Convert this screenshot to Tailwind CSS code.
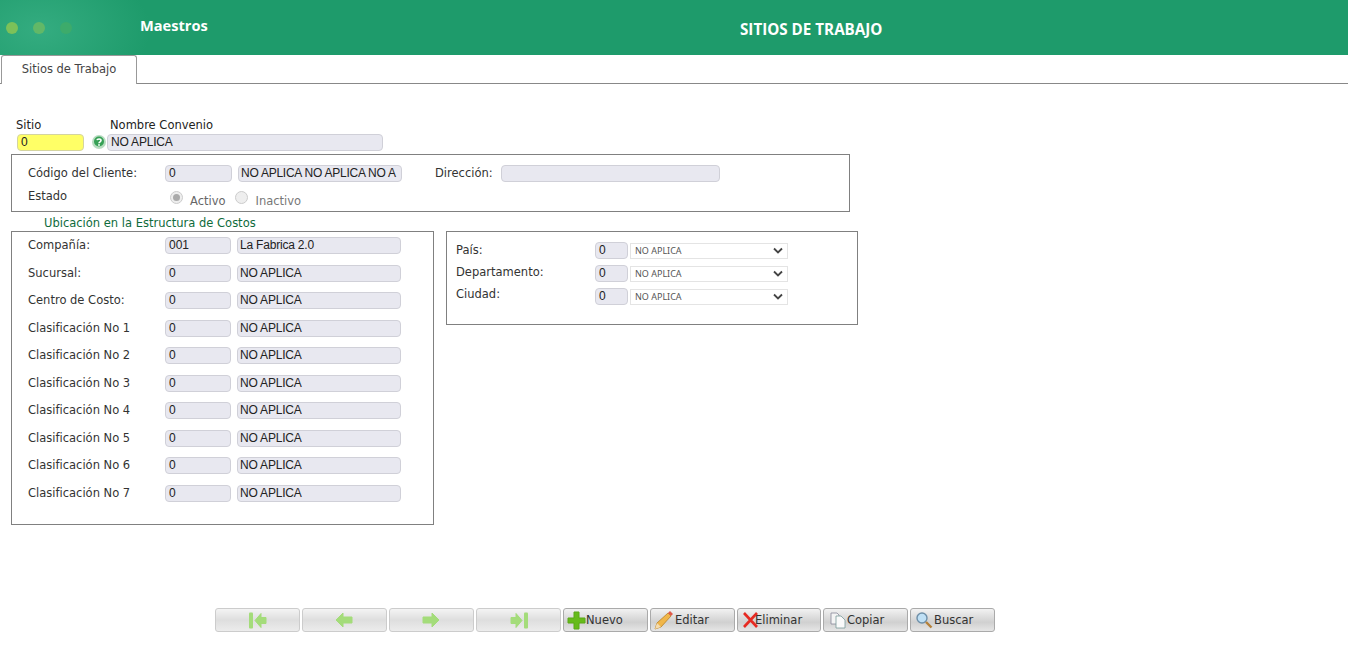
<!DOCTYPE html>
<html lang="es">
<head>
  <meta charset="UTF-8" />
  <title>Sitios de Trabajo</title>
  <script src="https://cdn.jsdelivr.net/npm/@tailwindcss/browser@4"></script>
</head>
<body class="bg-white h-[657px] overflow-hidden font-['DejaVu_Sans',sans-serif] text-[11.500px] text-[#333]">

  <!-- encabezado -->
  <header class="h-[55px] flex items-center bg-[#1e9b6b] bg-[radial-gradient(ellipse_110px_70px_at_40px_30px,#34ac80,#1e9b6b)] text-white font-['Open_Sans',sans-serif] font-bold">
    <div class="w-[140px] flex items-center gap-[15px] pl-[6px]">
      <span class="w-[12px] h-[12px] rounded-full bg-[#7cc159]"></span>
      <span class="w-[12px] h-[12px] rounded-full bg-[#62b867]"></span>
      <span class="w-[12px] h-[12px] rounded-full bg-[#3dab6b]"></span>
    </div>
    <div class="w-[600px] text-[14.600px] -mt-[3px]">Maestros</div>
    <div class="text-[15.200px] mt-[4px]">SITIOS DE TRABAJO</div>
  </header>

  <!-- pestaña -->
  <nav class="h-[29px] border-b border-[#888] flex items-end pl-[1px]">
    <div class="w-[136px] h-[29px] -mb-px bg-white border border-b-0 border-[#999] rounded-t-[3px] flex items-center justify-center text-[#444]">Sitios de Trabajo</div>
  </nav>

  <main class="pl-[11px]">
    <!-- sitio -->
    <div class="flex h-[49px] pl-[5px] pt-[34px]">
      <div class="w-[94px] h-[15px] leading-[15px] text-[#222]">Sitio</div>
      <div class="h-[15px] leading-[15px] text-[#222]">Nombre Convenio</div>
    </div>
    <div class="flex items-center h-[18px] pl-[6px] mb-[3px]">
      <div class="w-[67px] h-[17px] rounded-[4px] border border-[#d4d4a0] bg-[#ffff66] pl-[3px] text-[12px] leading-[15px] font-['Liberation_Sans',sans-serif] text-[#222]">0</div>
      <svg class="ml-[8px] w-[14px] h-[14px]" viewBox="0 0 14 14">
        <circle cx="7" cy="7" r="7" fill="#b7dcc0"/>
        <circle cx="7" cy="6.500" r="5" fill="#36a055"/>
        <path d="M5 5.200c.3-1.500 4-1.700 4 .3 0 1.300-2 1.300-2 2.700" fill="none" stroke="#fff" stroke-width="1.600"/>
        <circle cx="7" cy="10" r=".9" fill="#fff"/>
      </svg>
      <div class="ml-[1px] w-[276px] h-[17px] rounded-[4px] border border-[#d0d0d8] bg-[#e8e8f0] pl-[3px] text-[12px] tracking-[-0.2px] leading-[15px] font-['Liberation_Sans',sans-serif] text-[#222]">NO APLICA</div>
    </div>

    <!-- cliente -->
    <section class="w-[839px] h-[58px] border border-[#808080] pl-[16px] pt-[10px]">
      <div class="flex items-center h-[17px]">
        <div class="w-[137px] mt-[1px]">Código del Cliente:</div>
        <div class="w-[67px] h-[17px] rounded-[4px] border border-[#d0d0d8] bg-[#e8e8f0] pl-[3px] text-[12px] leading-[15px] font-['Liberation_Sans',sans-serif] text-[#222]">0</div>
        <div class="ml-[6px] w-[164px] h-[17px] rounded-[4px] border border-[#d0d0d8] bg-[#e8e8f0] pl-[2px] text-[12px] tracking-[-0.25px] leading-[15px] font-['Liberation_Sans',sans-serif] text-[#222] whitespace-nowrap">NO APLICA NO APLICA NO A</div>
        <div class="ml-[33px] w-[66px] mt-[1px]">Dirección:</div>
        <div class="w-[219px] h-[17px] rounded-[4px] border border-[#d0d0d8] bg-[#e8e8f0]"></div>
      </div>
      <div class="flex items-center h-[24px] mt-[3px]">
        <div class="w-[142px] -mt-[1px]">Estado</div>
        <span class="w-[13px] h-[13px] rounded-full border border-[#ccc] bg-[#eee] flex items-center justify-center"><span class="w-[7px] h-[7px] rounded-full bg-[#aaa]"></span></span>
        <span class="ml-[7px] mt-[10px] text-[#666]">Activo</span>
        <span class="ml-[9px] w-[13px] h-[13px] rounded-full border border-[#ccc] bg-[#eee]"></span>
        <span class="ml-[8px] mt-[10px] text-[#777]">Inactivo</span>
      </div>
    </section>

    <h3 class="pl-[33px] mt-[4px] h-[15px] leading-[15px] text-[#0f6b3c]">Ubicación en la Estructura de Costos</h3>

    <div class="flex items-start gap-[12px]">
      <!-- estructura de costos -->
      <section class="w-[423px] h-[294px] border border-[#808080] pl-[16px]">
        <div class="flex items-center h-[27.500px]"><div class="w-[137px]">Compañía:</div><div class="w-[66px] h-[17px] rounded-[4px] border border-[#d0d0d8] bg-[#e8e8f0] pl-[3px] text-[12px] leading-[15px] font-['Liberation_Sans',sans-serif] text-[#222]">001</div><div class="ml-[6px] w-[164px] h-[17px] rounded-[4px] border border-[#d0d0d8] bg-[#e8e8f0] pl-[2px] text-[12px] tracking-[-0.2px] leading-[15px] font-['Liberation_Sans',sans-serif] text-[#222]">La Fabrica 2.0</div></div>
        <div class="flex items-center h-[27.500px]"><div class="w-[137px]">Sucursal:</div><div class="w-[66px] h-[17px] rounded-[4px] border border-[#d0d0d8] bg-[#e8e8f0] pl-[3px] text-[12px] leading-[15px] font-['Liberation_Sans',sans-serif] text-[#222]">0</div><div class="ml-[6px] w-[164px] h-[17px] rounded-[4px] border border-[#d0d0d8] bg-[#e8e8f0] pl-[2px] text-[12px] tracking-[-0.2px] leading-[15px] font-['Liberation_Sans',sans-serif] text-[#222]">NO APLICA</div></div>
        <div class="flex items-center h-[27.500px]"><div class="w-[137px]">Centro de Costo:</div><div class="w-[66px] h-[17px] rounded-[4px] border border-[#d0d0d8] bg-[#e8e8f0] pl-[3px] text-[12px] leading-[15px] font-['Liberation_Sans',sans-serif] text-[#222]">0</div><div class="ml-[6px] w-[164px] h-[17px] rounded-[4px] border border-[#d0d0d8] bg-[#e8e8f0] pl-[2px] text-[12px] tracking-[-0.2px] leading-[15px] font-['Liberation_Sans',sans-serif] text-[#222]">NO APLICA</div></div>
        <div class="flex items-center h-[27.500px]"><div class="w-[137px]">Clasificación No 1</div><div class="w-[66px] h-[17px] rounded-[4px] border border-[#d0d0d8] bg-[#e8e8f0] pl-[3px] text-[12px] leading-[15px] font-['Liberation_Sans',sans-serif] text-[#222]">0</div><div class="ml-[6px] w-[164px] h-[17px] rounded-[4px] border border-[#d0d0d8] bg-[#e8e8f0] pl-[2px] text-[12px] tracking-[-0.2px] leading-[15px] font-['Liberation_Sans',sans-serif] text-[#222]">NO APLICA</div></div>
        <div class="flex items-center h-[27.500px]"><div class="w-[137px]">Clasificación No 2</div><div class="w-[66px] h-[17px] rounded-[4px] border border-[#d0d0d8] bg-[#e8e8f0] pl-[3px] text-[12px] leading-[15px] font-['Liberation_Sans',sans-serif] text-[#222]">0</div><div class="ml-[6px] w-[164px] h-[17px] rounded-[4px] border border-[#d0d0d8] bg-[#e8e8f0] pl-[2px] text-[12px] tracking-[-0.2px] leading-[15px] font-['Liberation_Sans',sans-serif] text-[#222]">NO APLICA</div></div>
        <div class="flex items-center h-[27.500px]"><div class="w-[137px]">Clasificación No 3</div><div class="w-[66px] h-[17px] rounded-[4px] border border-[#d0d0d8] bg-[#e8e8f0] pl-[3px] text-[12px] leading-[15px] font-['Liberation_Sans',sans-serif] text-[#222]">0</div><div class="ml-[6px] w-[164px] h-[17px] rounded-[4px] border border-[#d0d0d8] bg-[#e8e8f0] pl-[2px] text-[12px] tracking-[-0.2px] leading-[15px] font-['Liberation_Sans',sans-serif] text-[#222]">NO APLICA</div></div>
        <div class="flex items-center h-[27.500px]"><div class="w-[137px]">Clasificación No 4</div><div class="w-[66px] h-[17px] rounded-[4px] border border-[#d0d0d8] bg-[#e8e8f0] pl-[3px] text-[12px] leading-[15px] font-['Liberation_Sans',sans-serif] text-[#222]">0</div><div class="ml-[6px] w-[164px] h-[17px] rounded-[4px] border border-[#d0d0d8] bg-[#e8e8f0] pl-[2px] text-[12px] tracking-[-0.2px] leading-[15px] font-['Liberation_Sans',sans-serif] text-[#222]">NO APLICA</div></div>
        <div class="flex items-center h-[27.500px]"><div class="w-[137px]">Clasificación No 5</div><div class="w-[66px] h-[17px] rounded-[4px] border border-[#d0d0d8] bg-[#e8e8f0] pl-[3px] text-[12px] leading-[15px] font-['Liberation_Sans',sans-serif] text-[#222]">0</div><div class="ml-[6px] w-[164px] h-[17px] rounded-[4px] border border-[#d0d0d8] bg-[#e8e8f0] pl-[2px] text-[12px] tracking-[-0.2px] leading-[15px] font-['Liberation_Sans',sans-serif] text-[#222]">NO APLICA</div></div>
        <div class="flex items-center h-[27.500px]"><div class="w-[137px]">Clasificación No 6</div><div class="w-[66px] h-[17px] rounded-[4px] border border-[#d0d0d8] bg-[#e8e8f0] pl-[3px] text-[12px] leading-[15px] font-['Liberation_Sans',sans-serif] text-[#222]">0</div><div class="ml-[6px] w-[164px] h-[17px] rounded-[4px] border border-[#d0d0d8] bg-[#e8e8f0] pl-[2px] text-[12px] tracking-[-0.2px] leading-[15px] font-['Liberation_Sans',sans-serif] text-[#222]">NO APLICA</div></div>
        <div class="flex items-center h-[27.500px]"><div class="w-[137px]">Clasificación No 7</div><div class="w-[66px] h-[17px] rounded-[4px] border border-[#d0d0d8] bg-[#e8e8f0] pl-[3px] text-[12px] leading-[15px] font-['Liberation_Sans',sans-serif] text-[#222]">0</div><div class="ml-[6px] w-[164px] h-[17px] rounded-[4px] border border-[#d0d0d8] bg-[#e8e8f0] pl-[2px] text-[12px] tracking-[-0.2px] leading-[15px] font-['Liberation_Sans',sans-serif] text-[#222]">NO APLICA</div></div>
      </section>

      <!-- ubicacion -->
      <section class="w-[412px] h-[94px] border border-[#808080] pl-[9px] pt-[10px]">
        <div class="flex items-center h-[17px] mb-[6px]"><div class="w-[139px]">País:</div><div class="w-[33px] h-[17px] rounded-[4px] border border-[#d0d0d8] bg-[#e8e8f0] pl-[3px] text-[12px] leading-[15px] font-['Liberation_Sans',sans-serif] text-[#222]">0</div><div class="ml-[2px] w-[158px] h-[16px] border border-[#e4e4e4] flex items-center justify-between pl-[4px] pr-[4px] font-['Noto_Sans',sans-serif] text-[9px] text-[#555]">NO APLICA<svg class="w-[10px] h-[7px]" viewBox="0 0 10 7"><path d="M1 1.500l4 4 4-4" fill="none" stroke="#444" stroke-width="1.800"/></svg></div></div>
        <div class="flex items-center h-[17px] mb-[6px]"><div class="w-[139px] -mt-[1px]">Departamento:</div><div class="w-[33px] h-[17px] rounded-[4px] border border-[#d0d0d8] bg-[#e8e8f0] pl-[3px] text-[12px] leading-[15px] font-['Liberation_Sans',sans-serif] text-[#222]">0</div><div class="ml-[2px] w-[158px] h-[16px] border border-[#e4e4e4] flex items-center justify-between pl-[4px] pr-[4px] font-['Noto_Sans',sans-serif] text-[9px] text-[#555]">NO APLICA<svg class="w-[10px] h-[7px]" viewBox="0 0 10 7"><path d="M1 1.500l4 4 4-4" fill="none" stroke="#444" stroke-width="1.800"/></svg></div></div>
        <div class="flex items-center h-[17px]"><div class="w-[139px] -mt-[3px]">Ciudad:</div><div class="w-[33px] h-[17px] rounded-[4px] border border-[#d0d0d8] bg-[#e8e8f0] pl-[3px] text-[12px] leading-[15px] font-['Liberation_Sans',sans-serif] text-[#222]">0</div><div class="ml-[2px] w-[158px] h-[16px] border border-[#e4e4e4] flex items-center justify-between pl-[4px] pr-[4px] font-['Noto_Sans',sans-serif] text-[9px] text-[#555]">NO APLICA<svg class="w-[10px] h-[7px]" viewBox="0 0 10 7"><path d="M1 1.500l4 4 4-4" fill="none" stroke="#444" stroke-width="1.800"/></svg></div></div>
      </section>
    </div>

    <!-- barra de botones -->
    <div class="flex gap-[2px] ml-[204px] mt-[83px] text-[#333]">
      <button class="w-[85px] h-[24px] flex items-center justify-center rounded-[3px] border border-[#ccc] bg-[linear-gradient(#f4f4f4,#dedede_50%,#ececec)]"><svg class="w-[18px] h-[17px]" viewBox="0 0 18 16"><rect x="0" y="0" width="4" height="16" rx="1" fill="#a4dc7a"/><path d="M6 8l6-7v4h5v6h-5v4z" fill="#a4dc7a" stroke="#a4dc7a" stroke-linejoin="round"/></svg></button>
      <button class="w-[85px] h-[24px] flex items-center justify-center rounded-[3px] border border-[#ccc] bg-[linear-gradient(#f4f4f4,#dedede_50%,#ececec)]"><svg class="w-[18px] h-[16px] -ml-[2px]" viewBox="0 0 18 16"><path d="M1 8l7-7v4h9v6H8v4z" fill="#a4dc7a" stroke="#a4dc7a" stroke-linejoin="round"/></svg></button>
      <button class="w-[85px] h-[24px] flex items-center justify-center rounded-[3px] border border-[#ccc] bg-[linear-gradient(#f4f4f4,#dedede_50%,#ececec)]"><svg class="w-[18px] h-[16px] -ml-[2px]" viewBox="0 0 18 16"><path d="M17 8l-7-7v4H1v6h9v4z" fill="#a4dc7a" stroke="#a4dc7a" stroke-linejoin="round"/></svg></button>
      <button class="w-[85px] h-[24px] flex items-center justify-center rounded-[3px] border border-[#ccc] bg-[linear-gradient(#f4f4f4,#dedede_50%,#ececec)]"><svg class="w-[18px] h-[17px]" viewBox="0 0 18 16"><rect x="14" y="0" width="4" height="16" rx="1" fill="#a4dc7a"/><path d="M12 8L6 1v4H1v6h5v4z" fill="#a4dc7a" stroke="#a4dc7a" stroke-linejoin="round"/></svg></button>
      <button class="w-[85px] h-[24px] flex items-center pl-[3px] rounded-[3px] border border-[#aaa] bg-[linear-gradient(#f2f2f2,#d0d0d0_60%,#e6e6e6)]"><svg class="w-[19px] h-[19px] shrink-0" viewBox="0 0 19 19"><path d="M7 1h5v6h6v5h-6v6H7v-6H1V7h6z" fill="#66bb1a" stroke="#5aa816" stroke-width="1" stroke-linejoin="round"/></svg><span class="mt-[2px]">Nuevo</span></button>
      <button class="w-[85px] h-[24px] flex items-center pl-[3px] rounded-[3px] border border-[#aaa] bg-[linear-gradient(#f2f2f2,#d0d0d0_60%,#e6e6e6)]"><svg class="w-[20px] h-[20px] shrink-0 mr-[1px]" viewBox="0 0 20 20"><path d="M1 19l2-6L14 3l3 3L7 17z" fill="#f0b64a" stroke="#b98224" stroke-width=".8"/><path d="M14 3l2-2 3 3-2 2z" fill="#e05a4a"/><path d="M1 19l2-6 4 4z" fill="#f4dcb0"/></svg><span class="mt-[2px]">Editar</span></button>
      <button class="w-[84px] h-[24px] flex items-center pl-[5px] rounded-[3px] border border-[#aaa] bg-[linear-gradient(#f2f2f2,#d0d0d0_60%,#e6e6e6)]"><svg class="w-[15px] h-[16px] shrink-0 -mr-[3px]" viewBox="0 0 15 16"><path d="M1 1l13 14M14 1L1 15" stroke="#e62a22" stroke-width="2.600"/></svg><span class="mt-[2px]">Eliminar</span></button>
      <button class="w-[85px] h-[24px] flex items-center pl-[6px] rounded-[3px] border border-[#aaa] bg-[linear-gradient(#f2f2f2,#d0d0d0_60%,#e6e6e6)]"><svg class="w-[16px] h-[17px] shrink-0 mr-[1px]" viewBox="0 0 16 17"><path d="M1 1h6l2 2v9H1z" fill="#f4f4f4" stroke="#889" stroke-width=".8"/><path d="M6 4h5l4 4v8H6z" fill="#fafafa" stroke="#7a9a9a" stroke-width=".8"/></svg><span class="mt-[2px]">Copiar</span></button>
      <button class="w-[85px] h-[24px] flex items-center pl-[4px] rounded-[3px] border border-[#aaa] bg-[linear-gradient(#f2f2f2,#d0d0d0_60%,#e6e6e6)]"><svg class="w-[18px] h-[18px] shrink-0 mr-[1px]" viewBox="0 0 18 18"><circle cx="7" cy="7" r="5" fill="#bfe0f5" stroke="#6e8fa8" stroke-width="1.400"/><path d="M11 11l5.500 5.500" stroke="#b5813a" stroke-width="2.400"/></svg><span class="mt-[2px]">Buscar</span></button>
    </div>
  </main>
</body>
</html>
